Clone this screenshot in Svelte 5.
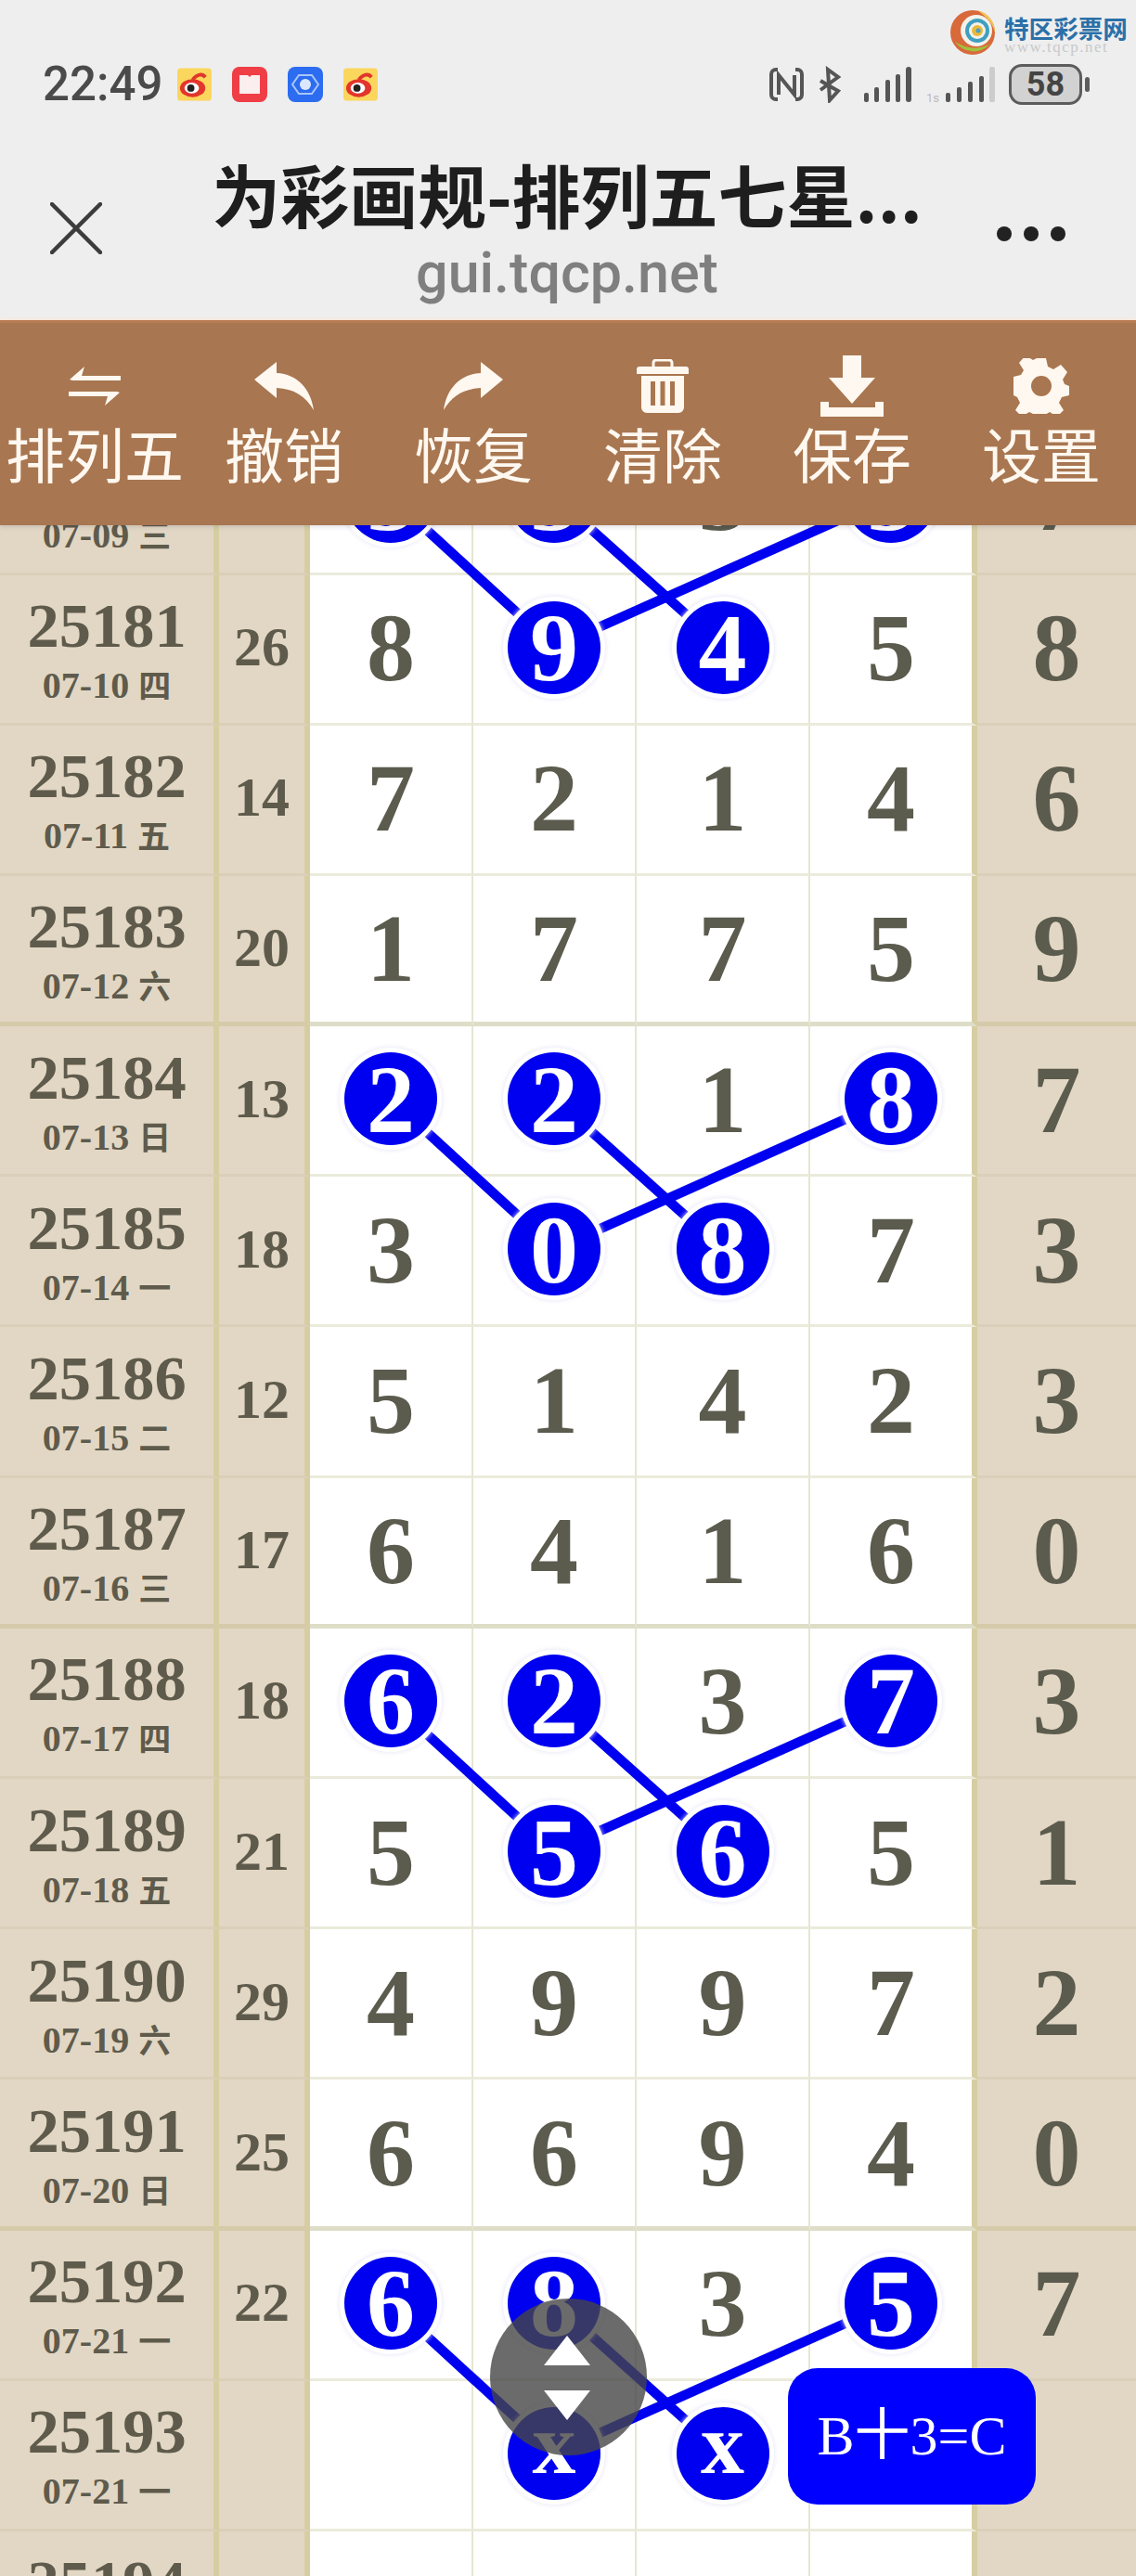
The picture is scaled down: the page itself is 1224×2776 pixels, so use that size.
<script lang="ts">
    const ROW_H = 162.2;
    const colCentres = [420.5, 597.5, 778.5, 960.5];

    // "marks" are the circled cells, x is a not-yet-drawn digit
    const rows = [
        { no: 25180, date: "07-09", day: "三", sum: 12, nums: [3, 3, 3, 3], last: 7, marks: [0, 1, 3] },
        { no: 25181, date: "07-10", day: "四", sum: 26, nums: [8, 9, 4, 5], last: 8, marks: [1, 2] },
        { no: 25182, date: "07-11", day: "五", sum: 14, nums: [7, 2, 1, 4], last: 6, marks: [] },
        { no: 25183, date: "07-12", day: "六", sum: 20, nums: [1, 7, 7, 5], last: 9, marks: [] },
        { no: 25184, date: "07-13", day: "日", sum: 13, nums: [2, 2, 1, 8], last: 7, marks: [0, 1, 3] },
        { no: 25185, date: "07-14", day: "一", sum: 18, nums: [3, 0, 8, 7], last: 3, marks: [1, 2] },
        { no: 25186, date: "07-15", day: "二", sum: 12, nums: [5, 1, 4, 2], last: 3, marks: [] },
        { no: 25187, date: "07-16", day: "三", sum: 17, nums: [6, 4, 1, 6], last: 0, marks: [] },
        { no: 25188, date: "07-17", day: "四", sum: 18, nums: [6, 2, 3, 7], last: 3, marks: [0, 1, 3] },
        { no: 25189, date: "07-18", day: "五", sum: 21, nums: [5, 5, 6, 5], last: 1, marks: [1, 2] },
        { no: 25190, date: "07-19", day: "六", sum: 29, nums: [4, 9, 9, 7], last: 2, marks: [] },
        { no: 25191, date: "07-20", day: "日", sum: 25, nums: [6, 6, 9, 4], last: 0, marks: [] },
        { no: 25192, date: "07-21", day: "一", sum: 22, nums: [6, 8, 3, 5], last: 7, marks: [0, 1, 3] },
        { no: 25193, date: "07-21", day: "一", sum: "", nums: ["", "x", "x", ""], last: "", marks: [1, 2] },
        { no: 25194, date: "07-22", day: "二", sum: "", nums: ["", "", "", ""], last: "", marks: [] },
    ];

    // each four-row block links its top row to the row below
    const links = [0, 4, 8, 12].flatMap((r) =>
        [[0, 1], [1, 2], [3, 1]].map(([a, b]) => ({
            x1: colCentres[a],
            y1: (r + 0.5) * ROW_H - 3,
            x2: colCentres[b],
            y2: (r + 1.5) * ROW_H - 3,
        })),
    );

    const tools = ["排列五", "撤销", "恢复", "清除", "保存", "设置"];
</script>

<div class="page">
    <header class="top">
        <div class="status">
            <div class="status-left">
                <span class="time">22:49</span>
                <svg class="weibo" viewBox="0 0 38 36">
                    <rect width="38" height="36" rx="4" fill="#fbd65c" />
                    <ellipse cx="17" cy="22" rx="14" ry="10" fill="#e2352c" />
                    <path d="M17 13c5-7 11-7 14-3" stroke="#e2352c" stroke-width="4" fill="none" />
                    <ellipse cx="16" cy="22" rx="8" ry="6" fill="#fff" />
                    <circle cx="15" cy="22" r="4" fill="#222" />
                </svg>
                <svg class="app red" viewBox="0 0 38 38">
                    <rect width="38" height="38" rx="8" fill="#ef3e46" />
                    <path d="M8 9h9l2 2 2-2h9v20H8z" fill="#fbeeee" />
                </svg>
                <svg class="app blue" viewBox="0 0 38 38">
                    <rect width="38" height="38" rx="8" fill="#2c6cf0" />
                    <path d="M12 9h14l7 10-7 10H12L5 19z" fill="none" stroke="#a9c6fa" stroke-width="2" />
                    <circle cx="19" cy="19" r="6" fill="#dbe7fd" />
                </svg>
                <svg class="weibo" viewBox="0 0 38 36">
                    <rect width="38" height="36" rx="4" fill="#fbd65c" />
                    <ellipse cx="17" cy="22" rx="14" ry="10" fill="#e2352c" />
                    <path d="M17 13c5-7 11-7 14-3" stroke="#e2352c" stroke-width="4" fill="none" />
                    <ellipse cx="16" cy="22" rx="8" ry="6" fill="#fff" />
                    <circle cx="15" cy="22" r="4" fill="#222" />
                </svg>
            </div>
            <div class="status-right">
                <svg class="nfc" viewBox="0 0 37 38">
                    <path d="M9 3H7a5 5 0 0 0-5 5v22a5 5 0 0 0 5 5h2M28 3h2a5 5 0 0 1 5 5v22a5 5 0 0 1-5 5h-2" fill="none" stroke="#555" stroke-width="4" />
                    <path d="M10 30V9l17 21V9" fill="none" stroke="#555" stroke-width="4" />
                </svg>
                <svg class="bt" viewBox="0 0 26 40">
                    <path d="M3 16 22 27 13 37 11 4 22 12 3 26" fill="none" stroke="#555" stroke-width="4" />
                </svg>
                <svg class="sig" viewBox="0 0 51 38">
                    <g fill="#555">
                        <rect x="0" y="28" width="5" height="10" rx="2" />
                        <rect x="11" y="22" width="5" height="16" rx="2" />
                        <rect x="23" y="14" width="5" height="24" rx="2" />
                        <rect x="45" y="0" width="6" height="38" rx="3" />
                        <rect x="34" y="8" width="5" height="30" rx="2" />
                    </g>
                </svg>
                <svg class="sig2" viewBox="0 0 74 38">
                    <text x="0" y="38" font-size="13" font-family="Roboto, sans-serif" fill="#bbb">1s</text>
                    <g fill="#555">
                        <rect x="21" y="28" width="5" height="10" rx="2" />
                        <rect x="33" y="22" width="5" height="16" rx="2" />
                        <rect x="45" y="16" width="5" height="22" rx="2" />
                        <rect x="57" y="10" width="5" height="28" rx="2" />
                    </g>
                    <rect x="68" y="0" width="6" height="38" rx="2" fill="#ccc" />
                </svg>
                <div class="battery"><span>58</span></div>
                <i class="nub"></i>
            </div>
        </div>
        <div class="nav">
            <svg class="close" viewBox="0 0 56 56">
                <path d="M2 2 54 54M54 2 2 54" stroke="#3c3c3c" stroke-width="4.5" stroke-linecap="round" />
            </svg>
            <div class="titles">
                <div class="title">为彩画规-排列五七星...</div>
                <div class="url">gui.tqcp.net</div>
            </div>
            <div class="more"><i></i><i></i><i></i></div>
        </div>
    </header>

    <nav class="toolbar">
        {#each tools as label, i}
            <button class="tool">
                <span class="icon">
                    {#if i === 0}
                        <svg width="56" height="44" viewBox="0 0 56 44">
                            <path d="M1 15 17 1l-3 10h42v5H4zM55 29 39 43l3-10H0v-5h52z" fill="#fff8f0" />
                        </svg>
                    {:else if i === 1}
                        <svg width="64" height="52" viewBox="0 0 64 52">
                            <path d="M0 19 24 0v12c22 1 37 17 40 40C55 36 42 29 24 28v11z" fill="#fff8f0" />
                        </svg>
                    {:else if i === 2}
                        <svg width="64" height="52" viewBox="0 0 64 52">
                            <path d="M64 19 40 0v12C18 13 3 29 0 52c9-16 22-23 40-24v11z" fill="#fff8f0" />
                        </svg>
                    {:else if i === 3}
                        <svg width="56" height="58" viewBox="0 0 56 58">
                            <path d="M18 8V4a3 3 0 0 1 3-3h14a3 3 0 0 1 3 3v4" fill="none" stroke="#fff8f0" stroke-width="3" />
                            <path d="M3 8h50a3 3 0 0 1 3 3v5H0v-5a3 3 0 0 1 3-3z" fill="#fff8f0" />
                            <path fill-rule="evenodd" d="M5 18h46v34a6 6 0 0 1-6 6H11a6 6 0 0 1-6-6zM15 24v26h5V24zM25.500 24v26h5V24zM36 24v26h5V24z" fill="#fff8f0" />
                        </svg>
                    {:else if i === 4}
                        <svg width="68" height="66" viewBox="0 0 68 66">
                            <path d="M24 0h20v24h15L34 52 9 24h15zM0 56h68v10H0z" fill="#fff8f0" />
                            <path d="M0 56h9v-6H0zM59 56h9v-6h-9z" fill="#fff8f0" />
                        </svg>
                    {:else}
                        <svg width="60" height="60" viewBox="0 0 60 60">
                            <path fill-rule="evenodd" d="M25 0h10l2 9 6 3 8-5 7 8-5 8 2 5 5 2v10l-8 2-3 6 5 8-7 7-8-5-5 3-2 9H25l-2-9-6-3-8 5-7-7 5-8-3-6-4-2V20l8-2 3-5-5-8 7-8 8 5 6-3zM30 19a11 11 0 1 0 0 22 11 11 0 0 0 0-22z" fill="#fff8f0" />
                        </svg>
                    {/if}
                </span>
                <span class="tool-label">{label}</span>
            </button>
        {/each}
    </nav>

    <main class="sheet">
        <div class="grid">
            {#each rows as row, r}
                <div class="row" class:block-end={r % 4 === 3}>
                    <div class="cell side issue">
                        <span class="no">{row.no}</span>
                        <span class="date">{row.date} <em>{row.day}</em></span>
                    </div>
                    <div class="cell side sum">{row.sum}</div>
                    {#each row.nums as n, c}
                        <div class="cell digit" class:wide-rule={c === 3}>
                            {#if row.marks.includes(c)}
                                <span class="mark" class:unknown={n === "x"}>{n}</span>
                            {:else}
                                {n}
                            {/if}
                        </div>
                    {/each}
                    <div class="cell side digit last">{row.last}</div>
                </div>
            {/each}
            <svg class="links" width="1224" height={rows.length * ROW_H}>
                {#each links as l}
                    <line x1={l.x1} y1={l.y1} x2={l.x2} y2={l.y2} stroke="#0000f0" stroke-width="10.5" />
                {/each}
            </svg>
        </div>
    </main>

    <!-- site watermark, burned over the status bar -->
    <div class="watermark">
        <svg width="50" height="54" viewBox="0 0 50 54">
            <circle cx="25" cy="27" r="24" fill="#d8693a" />
            <path d="M6 37a24 24 0 0 0 38 2c-8 5-22 8-38-2z" fill="#9fc23c" />
            <path d="M30 3a24 24 0 0 1 19 24c-2-9-9-17-19-24z" fill="#f3c35a" />
            <circle cx="29" cy="25" r="17" fill="#f4f1ea" />
            <circle cx="30" cy="25" r="13" fill="#3f9fc0" />
            <circle cx="30" cy="25" r="9" fill="#f4f1ea" />
            <circle cx="30" cy="25" r="6" fill="#e8b93a" />
            <circle cx="31" cy="25" r="2.500" fill="#4aa0c8" />
        </svg>
        <div class="mark-text">
            <strong>特区彩票网</strong>
            <small>www.tqcp.net</small>
        </div>
    </div>

    <div class="scroller">
        <i class="up"></i>
        <i class="down"></i>
    </div>
    <button class="formula">B十3=C</button>
</div>

<style>
    :global(body) {
        margin: 0;
        background: #fff;
    }

    .page {
        position: relative;
        width: 1224px;
        height: 2776px;
        overflow: hidden;
        font-family: "Liberation Serif", "Noto Sans CJK SC", serif;
    }

    /* PHONE + BROWSER CHROME */
    .top {
        box-sizing: border-box;
        height: 345px;
        padding-top: 69px;
        background: #eeeeef;
        border-bottom: 3px solid #f7ece3;
    }

    .status {
        display: flex;
        justify-content: space-between;
        height: 44px;
        padding: 0 50px 0 46px;
        align-items: center;
    }

    .status-left,
    .status-right {
        display: flex;
        align-items: center;
    }

    .time {
        font: 500 51px/44px Roboto, sans-serif;
        color: #4a4a4a;
        margin-right: 19px;
        width: 126px;
    }

    .weibo {
        width: 37px;
        height: 36px;
    }

    .app {
        width: 38px;
        height: 38px;
    }

    .red {
        margin: 0 22px;
    }

    .blue {
        margin-right: 22px;
    }

    .nfc {
        width: 37px;
        height: 38px;
        margin-right: 15px;
    }

    .bt {
        width: 26px;
        height: 40px;
        margin-right: 24px;
    }

    .sig {
        width: 51px;
        height: 38px;
        margin-right: 16px;
    }

    .sig2 {
        width: 74px;
        height: 38px;
        margin-right: 15px;
    }

    .battery {
        box-sizing: border-box;
        width: 79px;
        height: 44px;
        border: 3px solid #5c5c5c;
        border-radius: 14px;
        background: #d2d2d2;
        display: flex;
        align-items: center;
        justify-content: center;
        font: 700 36px/1 Roboto, sans-serif;
        color: #444;
    }

    .nub {
        width: 5px;
        height: 16px;
        margin-left: 3px;
        border-radius: 3px;
        background: #5c5c5c;
    }

    .nav {
        display: flex;
        align-items: flex-start;
        padding-top: 50px;
    }

    .close {
        width: 56px;
        height: 56px;
        margin: 55px 0 0 54px;
    }

    .titles {
        width: 840px;
        margin-left: 81px;
        text-align: center;
    }

    .title {
        font: 700 74px/90px "Noto Sans CJK SC", sans-serif;
        color: #1e1e1e;
        white-space: nowrap;
    }

    .url {
        font: 500 61px/70px Roboto, "Noto Sans", sans-serif;
        color: #7f7f7f;
        margin-top: 6px;
    }

    .more {
        display: flex;
        gap: 13px;
        margin: 81px 0 0 43px;
    }

    .more i {
        width: 16px;
        height: 16px;
        border-radius: 50%;
        background: #222;
    }

    /* TOOLBAR */
    .toolbar {
        position: relative;
        z-index: 5;
        box-sizing: border-box;
        height: 221px;
        display: grid;
        grid-template-columns: repeat(6, 204px);
        background: #a87650;
        border-top: 3px solid #b87b52;
        box-shadow: 0 2px 5px rgba(0, 0, 60, 0.12);
    }

    .tool {
        appearance: none;
        border: 0;
        padding: 34px 0 0;
        background: none;
        color: #fff8f0;
        display: flex;
        flex-direction: column;
        align-items: center;
        justify-content: flex-start;
        font-family: "Noto Sans CJK SC", sans-serif;
    }

    .icon {
        height: 68px;
        display: flex;
        align-items: center;
    }

    .tool-label {
        font-size: 64px;
        line-height: 76px;
        margin-top: -1px;
    }

    /* TABLE */
    .sheet {
        height: 2210px;
        overflow: hidden;
    }

    .grid {
        position: relative;
        margin-top: -108.7px;
    }

    .row {
        display: grid;
        grid-template-columns: 236px 98px 176px 176px 187px 180px 171px;
        height: 162.2px;
    }

    .cell {
        box-sizing: border-box;
        display: flex;
        align-items: center;
        justify-content: center;
        padding-bottom: 3px;
        background: #fff;
        border-bottom: 3px solid #ebebdc;
        border-right: 2px solid #e6e6d2;
    }

    .row.block-end .cell {
        border-bottom: 5px solid #dedec8;
        padding-bottom: 1px;
    }

    .side {
        background: #e2d7c4;
        border-bottom-color: #dacfb9;
        border-right: 6px solid #d6cea2;
    }

    .row.block-end .side {
        border-bottom-color: #d5cbaa;
    }

    .digit {
        font-size: 104px;
        font-weight: 700;
        color: #5b5b4e;
    }

    .wide-rule {
        border-right: 6px solid #d6cea2;
    }

    .last {
        border-right: 0;
    }

    .issue {
        flex-direction: column;
        padding-top: 10px;
        color: #5f5b4c;
        font-weight: 700;
    }

    .no {
        font-size: 68.5px;
        line-height: 64px;
    }

    .date {
        font-size: 40px;
        line-height: 48px;
        margin-top: 5px;
    }

    .date em {
        font: 700 35px "Noto Sans CJK SC", sans-serif;
    }

    .sum {
        font-size: 60px;
        font-weight: 700;
        color: #5f5b4c;
    }

    .mark {
        position: relative;
        z-index: 2;
        box-sizing: border-box;
        width: 100px;
        height: 100px;
        flex: none;
        display: flex;
        align-items: center;
        justify-content: center;
        border-radius: 50%;
        background: #0000f0;
        color: #fff;
        box-shadow: 0 0 0 5px #fff, 0 0 4px 6px rgba(225, 225, 245, 0.7);
    }

    .mark.unknown {
        font-size: 94px;
        padding-bottom: 22px;
    }

    .links {
        position: absolute;
        top: 0;
        left: 0;
        z-index: 1;
    }

    /* FLOATING BITS */
    .watermark {
        position: absolute;
        top: 8px;
        left: 1023px;
        display: flex;
        gap: 9px;
    }

    .mark-text {
        display: flex;
        flex-direction: column;
        padding-top: 8px;
    }

    .mark-text strong {
        font: 700 26.600px/27px "Noto Sans CJK SC", sans-serif;
        color: #2b70a8;
        white-space: nowrap;
    }

    .mark-text small {
        font: 17px/16px "Liberation Serif", serif;
        color: #c9c9c9;
        letter-spacing: 1.500px;
        white-space: nowrap;
    }

    .scroller {
        position: absolute;
        z-index: 6;
        left: 528px;
        top: 2477px;
        width: 169px;
        height: 169px;
        border-radius: 50%;
        background: rgba(70, 70, 70, 0.8);
        display: flex;
        flex-direction: column;
        align-items: center;
        padding-top: 40px;
        box-sizing: border-box;
        gap: 27px;
    }

    .scroller i {
        width: 0;
        height: 0;
        border-left: 25px solid transparent;
        border-right: 25px solid transparent;
        margin-right: 4px;
    }

    .up {
        border-bottom: 32px solid #fff;
    }

    .down {
        border-top: 32px solid #fff;
    }

    .formula {
        position: absolute;
        z-index: 6;
        left: 849px;
        top: 2552px;
        width: 267px;
        height: 147px;
        border: 0;
        border-radius: 32px;
        padding: 0 0 14px;
        background: #0000ff;
        color: #fff;
        font: 60px "Liberation Serif", "Noto Sans CJK SC", serif;
        white-space: nowrap;
    }
</style>
